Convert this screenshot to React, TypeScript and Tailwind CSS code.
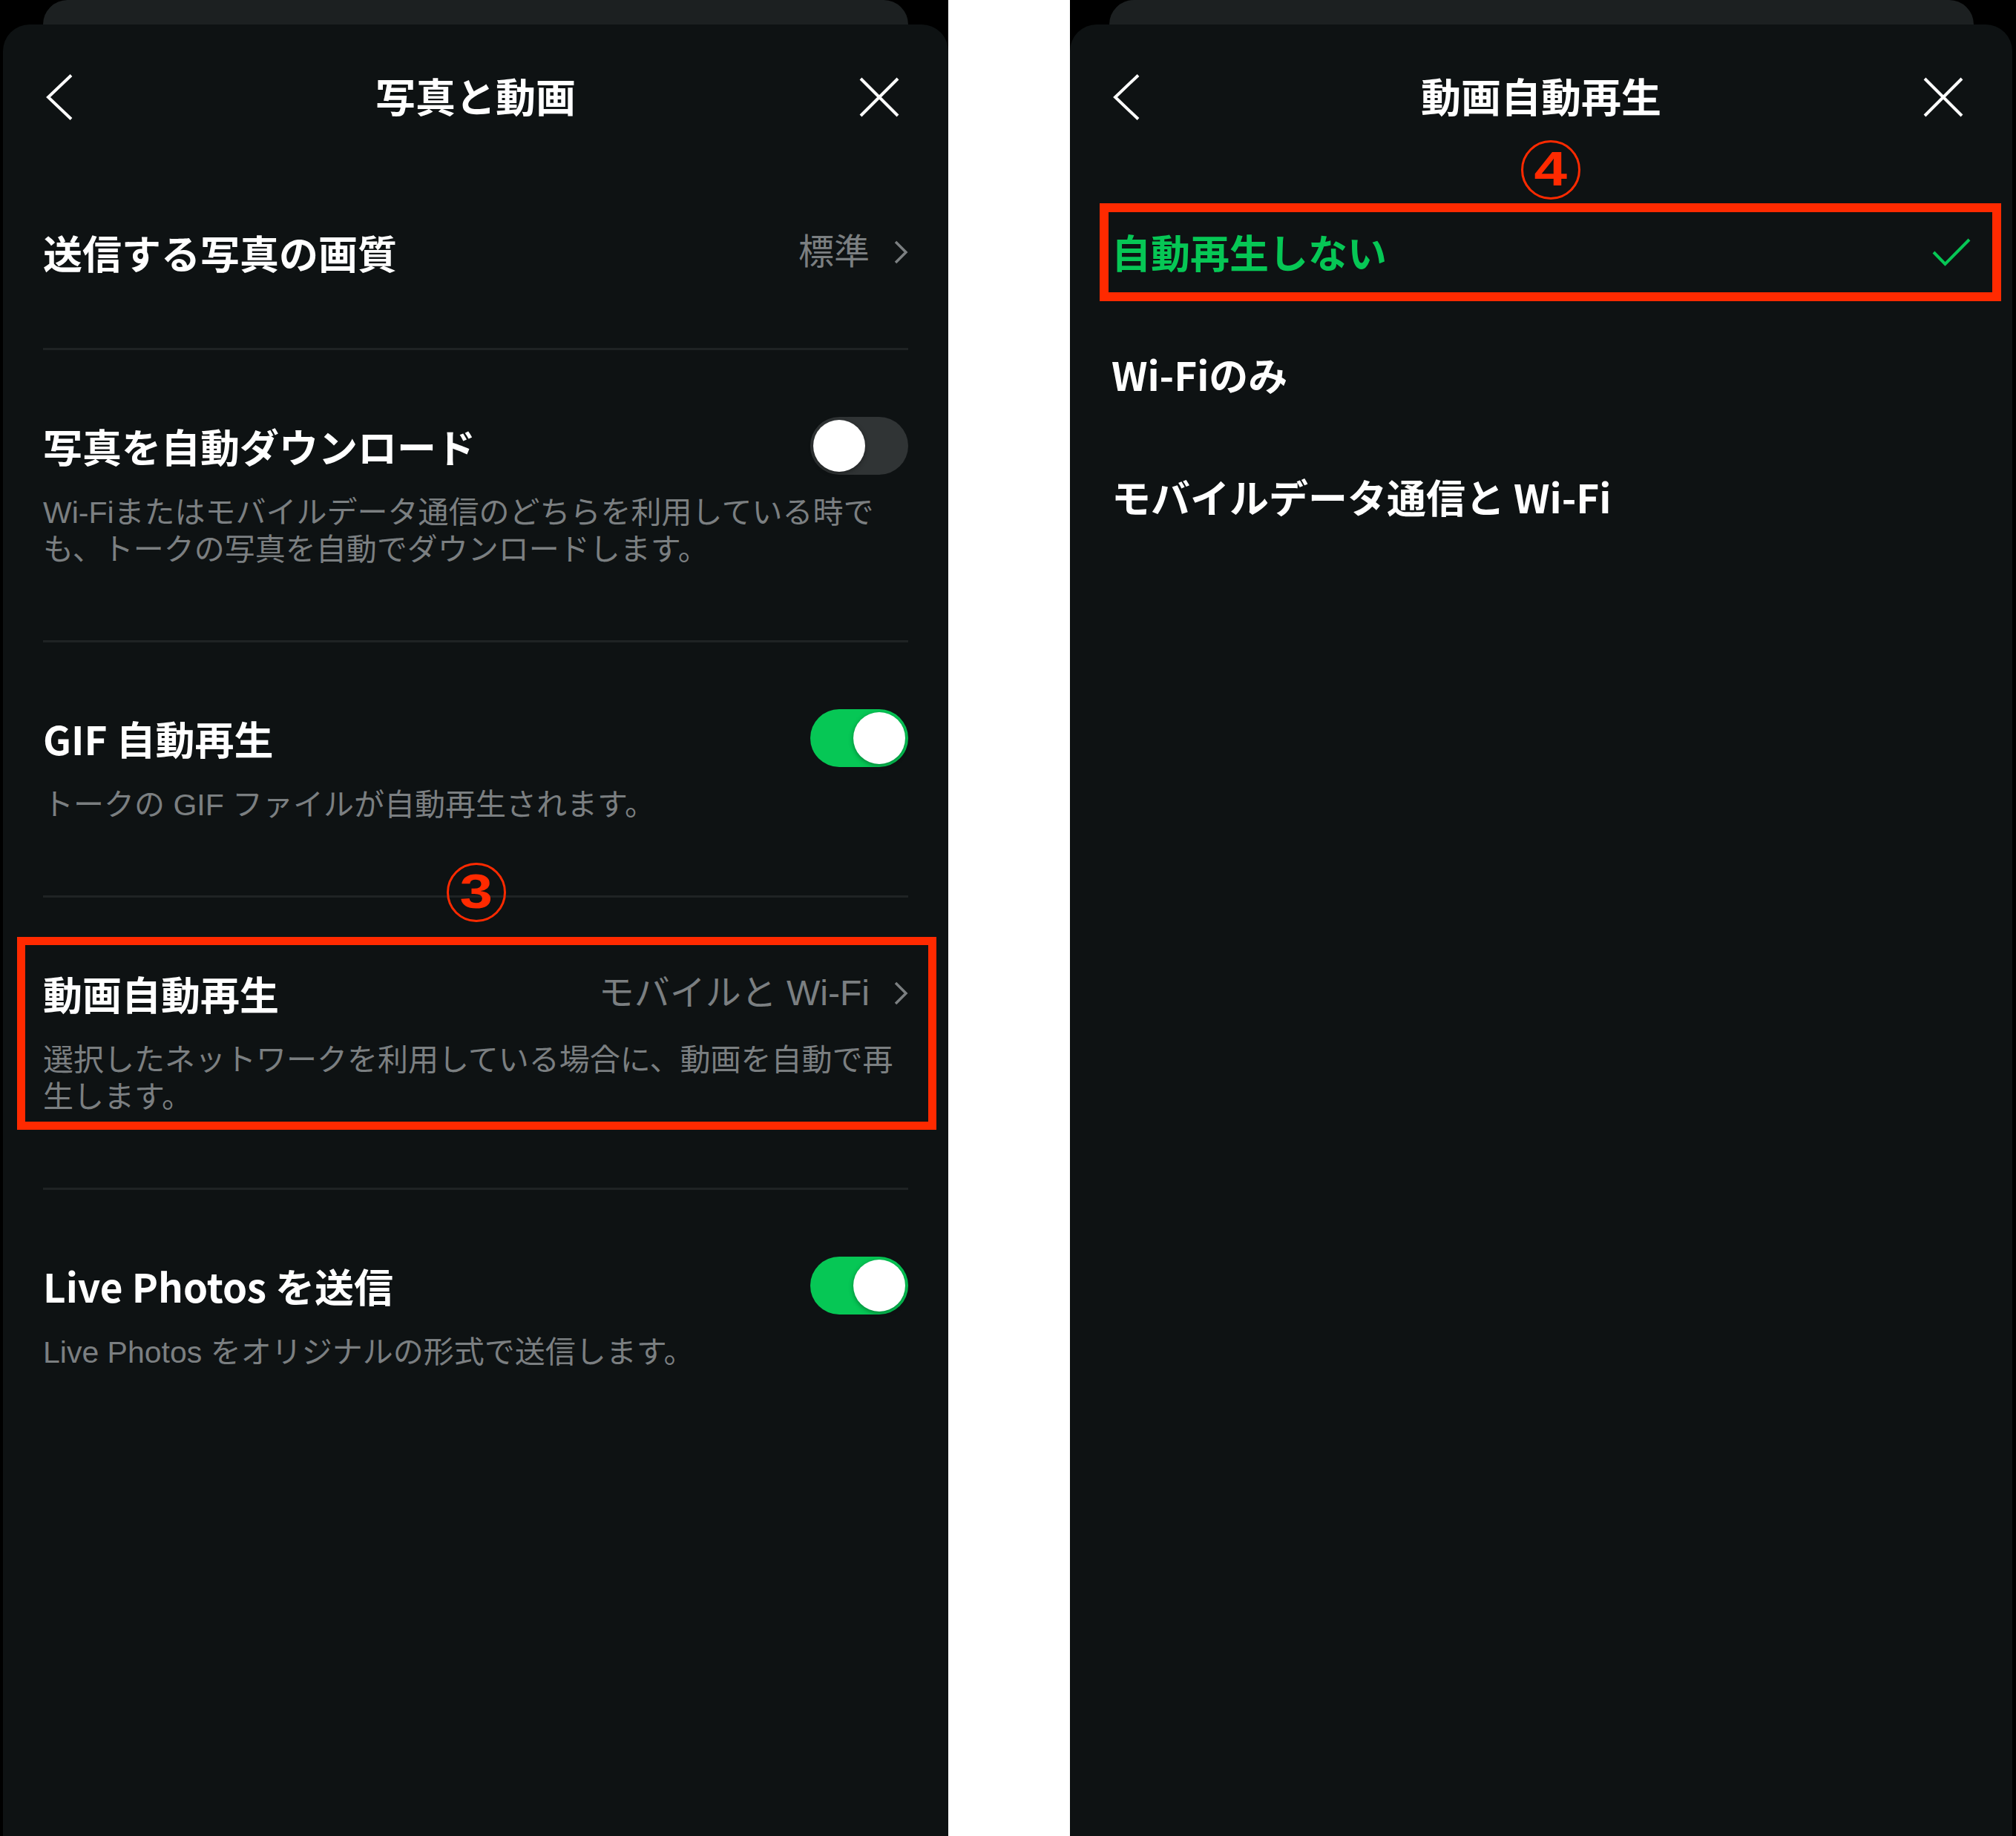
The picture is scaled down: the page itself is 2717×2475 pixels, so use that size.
import React from "react";

const GRAY = "text-[#7b7f81]";
const LATIN_FIRST = "font-['Liberation_Sans','Noto_Sans_CJK_JP',sans-serif]";

function BackIcon() {
  return (
    <svg width="36" height="62" viewBox="0 0 36 62" fill="none">
      <path d="M34 1.5 L3 31 L34 60.5" stroke="white" strokeWidth="4" strokeLinecap="butt" strokeLinejoin="miter" />
    </svg>
  );
}

function CloseIcon() {
  return (
    <svg width="54" height="54" viewBox="0 0 54 54" fill="none">
      <path d="M2 2 L52 52 M52 2 L2 52" stroke="white" strokeWidth="4" />
    </svg>
  );
}

function RowChevron() {
  return (
    <svg width="20" height="32" viewBox="0 0 20 32" fill="none">
      <path d="M3 2 L17 16 L3 30" stroke="#7b7f81" strokeWidth="3.5" />
    </svg>
  );
}

function Check() {
  return (
    <svg width="52" height="38" viewBox="0 0 52 38" fill="none">
      <path d="M2 19 L17.5 35 L50 2" stroke="#06c755" strokeWidth="4" />
    </svg>
  );
}

function Toggle({ on }: { on: boolean }) {
  return (
    <div
      className={
        on
          ? "w-[132px] h-[78px] rounded-full bg-[#06c755] p-[4px] flex items-center justify-end"
          : "w-[132px] h-[78px] rounded-full bg-[#303435] p-[4px] flex items-center justify-start"
      }
    >
      <div className="w-[70px] h-[70px] rounded-full bg-white shadow-[0_2px_6px_rgba(0,0,0,0.35)]" />
    </div>
  );
}

function Circled({ n }: { n: string }) {
  return (
    <div className="w-[80px] h-[80px] rounded-full border-[3px] border-[#ff2a00] flex items-center justify-center">
      <span className="text-[64px] leading-none font-bold text-[#ff2a00] font-['Liberation_Sans',sans-serif] scale-x-125 -mt-[2px]">
        {n}
      </span>
    </div>
  );
}

function Header({ title }: { title: string }) {
  return (
    <div className="h-[196px] grid grid-cols-[1fr_auto_1fr] items-center px-[58px]">
      <div className="flex items-center">
        <BackIcon />
      </div>
      <div className="text-[54px] font-bold text-white leading-none -mt-[5px]">{title}</div>
      <div className="flex items-center justify-end pr-[8px]">
        <CloseIcon />
      </div>
    </div>
  );
}

function Divider() {
  return <div className="h-[3px] bg-[#1f2324]" />;
}

function Title({ children }: { children: React.ReactNode }) {
  return <span className="text-[53px] font-bold text-white leading-none whitespace-nowrap">{children}</span>;
}

function Desc({ children }: { children: React.ReactNode }) {
  return (
    <div className={`mt-[26px] text-[41px] leading-[50px] whitespace-nowrap ${LATIN_FIRST} ${GRAY}`}>{children}</div>
  );
}

function Value({ children }: { children: React.ReactNode }) {
  return <span className={`text-[48px] leading-none whitespace-nowrap ${LATIN_FIRST} ${GRAY}`}>{children}</span>;
}

function LeftScreen() {
  return (
    <div className="w-[1278px] h-full bg-black pl-[4px] flex flex-col">
      <div className="h-[33px] flex">
        <div className="flex-1 ml-[54px] mr-[54px] rounded-t-[40px] bg-[#1c2021]" />
      </div>
      <div className="flex-1 relative rounded-t-[36px] bg-[#0e1213]">
        <Header title="写真と動画" />
        <div className="px-[54px]">
          <div className="pt-[72px] pb-[90px]">
            <div className="h-[78px] flex items-center justify-between">
              <Title>送信する写真の画質</Title>
              <div className="flex items-center gap-[32px]">
                <Value>標準</Value>
                <RowChevron />
              </div>
            </div>
          </div>
          <Divider />

          <div className="pt-[90px] pb-[97px]">
            <div className="h-[78px] flex items-center justify-between">
              <Title>写真を自動ダウンロード</Title>
              <Toggle on={false} />
            </div>
            <Desc>
              Wi-Fiまたはモバイルデータ通信のどちらを利用している時で
              <br />
              も、トークの写真を自動でダウンロードします。
            </Desc>
          </div>
          <Divider />

          <div className="pt-[90px] pb-[97px]">
            <div className="h-[78px] flex items-center justify-between">
              <Title>GIF 自動再生</Title>
              <Toggle on={true} />
            </div>
            <Desc>トークの GIF ファイルが自動再生されます。</Desc>
          </div>
          <Divider />

          <div className="pt-[90px] pb-[97px]">
            <div className="h-[78px] flex items-center justify-between">
              <Title>動画自動再生</Title>
              <div className="flex items-center gap-[32px]">
                <Value>モバイルと Wi-Fi</Value>
                <RowChevron />
              </div>
            </div>
            <Desc>
              選択したネットワークを利用している場合に、動画を自動で再
              <br />
              生します。
            </Desc>
          </div>
          <Divider />

          <div className="pt-[90px] pb-[97px]">
            <div className="h-[78px] flex items-center justify-between">
              <Title>Live Photos を送信</Title>
              <Toggle on={true} />
            </div>
            <Desc>Live Photos をオリジナルの形式で送信します。</Desc>
          </div>
        </div>

        <div className="absolute left-[19px] top-[1230px] w-[1239px] h-[260px] border-[11px] border-[#ff2a00]" />
        <div className="absolute left-[598px] top-[1130px]">
          <Circled n="3" />
        </div>
      </div>
    </div>
  );
}

function RightScreen() {
  return (
    <div className="w-[1275px] h-full bg-black pr-[5px] flex flex-col">
      <div className="h-[33px] flex">
        <div className="flex-1 ml-[53px] mr-[52px] rounded-t-[40px] bg-[#1c2021]" />
      </div>
      <div className="flex-1 relative rounded-t-[36px] bg-[#0e1213]">
        <Header title="動画自動再生" />
        <div className="pt-[28px]">
          <div className="h-[165px] px-[56px] flex items-center justify-between">
            <span className="text-[53px] font-bold text-[#06c755] leading-none">自動再生しない</span>
            <Check />
          </div>
          <div className="h-[165px] px-[56px] flex items-center">
            <Title>Wi-Fiのみ</Title>
          </div>
          <div className="h-[165px] px-[56px] flex items-center">
            <Title>モバイルデータ通信と Wi-Fi</Title>
          </div>
        </div>

        <div className="absolute left-[40px] top-[241px] w-[1215px] h-[132px] border-[12px] border-[#ff2a00]" />
        <div className="absolute left-[608px] top-[156px]">
          <Circled n="4" />
        </div>
      </div>
    </div>
  );
}

export default function App() {
  return (
    <div className="w-[2717px] h-[2475px] bg-white flex font-['Noto_Sans_CJK_JP',sans-serif] overflow-hidden">
      <LeftScreen />
      <div className="w-[164px] h-full bg-white" />
      <RightScreen />
    </div>
  );
}
